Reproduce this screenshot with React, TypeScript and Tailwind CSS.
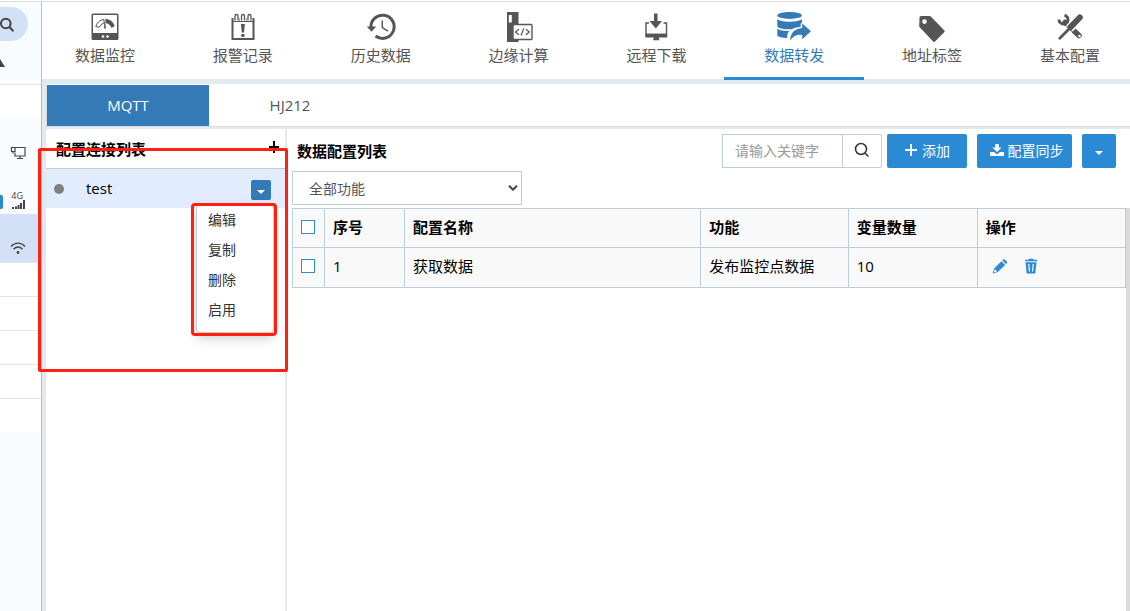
import { useState, type ReactNode } from "react";
import clsx from "clsx";

// --- NAV ICONS ---
const MonitorIcon = () => (
  <svg viewBox="0 0 36 32" className="h-8 w-9" fill="currentColor">
    <path fillRule="evenodd" d="M6 2.5h24a1.5 1.5 0 0 1 1.5 1.5v23.500a1.500 1.500 0 0 1-1.500 1.500H6a1.500 1.500 0 0 1-1.500-1.500V4A1.500 1.500 0 0 1 6 2.500zM6 4v18h24V4z" />
    <path d="M8.800 15.500a10.500 10.500 0 0 1 8-7.200l.4 3.500a8 8 0 0 0-5 4.500z" fill="none" stroke="currentColor" strokeWidth="1" />
    <path d="M18.300 7.800a11 11 0 0 1 9.400 7.200l-3.200 1.900a8 8 0 0 0-6-5z" />
    <path d="M17.200 11.500h1.200l.6 6h-1.800z" />
    <circle cx="16" cy="25.500" r="1.300" fill="white" />
    <circle cx="20.500" cy="25.500" r="1.300" fill="white" />
  </svg>
);

const AlarmIcon = () => (
  <svg viewBox="0 0 36 32" className="h-8 w-9" fill="currentColor">
    <path fillRule="evenodd" d="M6.500 7h23v22h-23zM8.500 11v16h19V11z" />
    <path d="M10 10V5a1.500 1.500 0 0 1 3 0v5M16.500 10V5a1.500 1.500 0 0 1 3 0v5M23 10V5a1.500 1.500 0 0 1 3 0v5" fill="none" stroke="white" strokeWidth="3" />
    <path d="M10 9.500V5a1.500 1.500 0 0 1 3 0v4.500M16.500 9.500V5a1.500 1.500 0 0 1 3 0v4.500M23 9.500V5a1.500 1.500 0 0 1 3 0v4.500" fill="none" stroke="currentColor" strokeWidth="1.300" />
    <path d="M15.900 13h4l-.9 8.500h-2.200z" />
    <rect x="16.300" y="23" width="3.200" height="2.800" />
  </svg>
);

const HistoryIcon = () => (
  <svg viewBox="0 0 36 32" className="h-8 w-9" fill="none" stroke="currentColor">
    <path d="M8 17a11.600 11.600 0 1 1 4.500 8" strokeWidth="3" />
    <path d="M3.800 15.500h9.400l-4.700 5.300z" fill="currentColor" stroke="none" />
    <path d="M19.300 9.500v7l5.700 3.700" strokeWidth="1.400" />
  </svg>
);

const EdgeIcon = () => (
  <svg viewBox="0 0 36 32" className="h-8 w-9" fill="currentColor">
    <path fillRule="evenodd" d="M6 1h11.500v30H6zM7.800 4v7.500h3V4z" />
    <rect x="12" y="13.500" width="19" height="15" rx="1" fill="white" stroke="currentColor" strokeWidth="1.400" />
    <path d="M17.800 18.200l-3.300 2.800 3.300 2.800M25 18.200l3.300 2.800-3.300 2.800M22.800 17.500l-2.800 7" fill="none" stroke="currentColor" strokeWidth="1.200" />
  </svg>
);

const DownloadIcon = () => (
  <svg viewBox="0 0 36 32" className="h-8 w-9" fill="currentColor">
    <path d="M16 2.500h3.500v7.500h4.500l-6.200 7.500-6.300-7.500H16z" />
    <path d="M11 12H8v11.500h20.500V12h-3" fill="none" stroke="currentColor" strokeWidth="1.400" />
    <path d="M7.300 22.700h21.900v3.800h-8.500l.8 2.700h-6.500l.8-2.700H7.300z" />
  </svg>
);

const ForwardIcon = () => (
  <svg viewBox="0 0 36 32" className="h-8 w-9" fill="currentColor">
    <ellipse cx="13.600" cy="4.400" rx="12.300" ry="3.500" />
    <path d="M1.300 8c3.500 3.700 21 3.700 24.600 0v4l-1.200.5v3.200c-4.700.3-7 1.600-9 2.600C9 18.500 3 17.500 1.300 15.500z" />
    <path d="M1.300 17.700c2.200 1.700 7 2.400 12 2.200-2 2.200-2.300 4.400-2 7-5-.1-9-1.200-10-2.500z" />
    <path d="M26.200 12.500 35 20.300l-8.800 8V24c-5-.6-9 .8-12.200 5.700.3-7.300 4.500-12.200 12.200-12.700z" />
  </svg>
);

const TagIcon = () => (
  <svg viewBox="0 0 36 32" className="h-8 w-9" fill="currentColor">
    <path fillRule="evenodd" d="M5.500 6.500A1.500 1.500 0 0 1 7 5h8.500a2 2 0 0 1 1.300.6l13.600 13.900a1 1 0 0 1 0 1.400l-9.600 9.800a1 1 0 0 1-1.400 0L5.700 16.300a2 2 0 0 1-.5-1.300zM10.500 8.300a2.300 2.300 0 1 0 0 4.600 2.300 2.300 0 0 0 0-4.600z" />
  </svg>
);

const ToolsIcon = () => (
  <svg viewBox="0 0 36 32" className="h-8 w-9" fill="none" stroke="currentColor" strokeLinecap="round">
    <path d="M13 11.500l14 13" strokeWidth="5.500" />
    <path d="M7 8.500a4.500 4.500 0 1 0 5.500-4.300" strokeWidth="3" strokeLinecap="butt" />
    <circle cx="27.500" cy="25" r="1.300" fill="white" stroke="none" />
    <path d="M7.800 27.200L17 18M17.500 17.500L27.500 6.500" stroke="white" strokeWidth="9" strokeLinecap="butt" />
    <path d="M7.800 27.200L18 17" strokeWidth="2.800" />
    <path d="M18.500 16.200l9.300-9.700" strokeWidth="6" />
  </svg>
);

const navItems: { label: string; icon: ReactNode }[] = [
  { label: "数据监控", icon: <MonitorIcon /> },
  { label: "报警记录", icon: <AlarmIcon /> },
  { label: "历史数据", icon: <HistoryIcon /> },
  { label: "边缘计算", icon: <EdgeIcon /> },
  { label: "远程下载", icon: <DownloadIcon /> },
  { label: "数据转发", icon: <ForwardIcon /> },
  { label: "地址标签", icon: <TagIcon /> },
  { label: "基本配置", icon: <ToolsIcon /> },
];

const menuItems = ["编辑", "复制", "删除", "启用"];

const configs = [{ id: 1, name: "获取数据", func: "发布监控点数据", count: 10 }];

const Caret = () => (
  <svg viewBox="0 0 8 4" className="h-1 w-2" fill="currentColor">
    <path d="M0 0h8L4 4z" />
  </svg>
);

const Checkbox = ({ label }: { label: string }) => (
  <input
    type="checkbox"
    aria-label={label}
    className="block size-3.5 appearance-none border border-[#2a8ad4] bg-white checked:bg-[#2a8ad4]"
  />
);

// --- DEVICE LIST (LEFT EDGE) ---
function Sidebar() {
  return (
    <aside className="w-[42px] shrink-0 border-r border-[#b8bec3] bg-[#f8fcff] text-[#444]">
      <div className="h-[83px] border-b border-[#e6e6e6] pt-[5px]">
        <button aria-label="搜索" className="flex h-[34px] w-7 items-center rounded-r-full bg-[#d3e1f8]">
          <svg viewBox="0 0 15 16" className="mt-0.5 h-4 w-[15px]" fill="none" stroke="currentColor" strokeWidth="2">
            <circle cx="5.800" cy="6.500" r="4.800" />
            <path d="M9.300 10l4.200 4.200" />
          </svg>
        </button>
        <svg viewBox="0 0 5 8" className="mt-[18px] h-2 w-[5px]" fill="currentColor">
          <path d="M0 0l5 8H0z" />
        </svg>
      </div>
      <div className="h-[33px] bg-white" />
      <div className="flex h-12 justify-end pt-7 pr-[15px]">
        <svg viewBox="0 0 16 14" className="h-3.5 w-4" fill="none" stroke="currentColor" strokeWidth="1.200">
          <path d="M5 1.500h10v8.500H5V6.500M7 12.500h6M10 10v2.500" />
          <path d="M1.500 1.500H5v4H1.500zM3 5.500v2" />
        </svg>
      </div>
      <div className="flex h-12 items-end justify-between pr-4 pb-[5px]">
        <span className="h-3.5 w-[3px] rounded-r-xs bg-[#2a8ad4]" />
        <span className="flex w-3.5 flex-col items-end">
          <span className="mr-0.5 text-[9px] leading-[9px]">4G</span>
          <svg viewBox="0 0 13 9" className="h-[9px] w-[13px]" fill="currentColor">
            <path d="M0 7h2v2H0zM3 6.500h2V9H3zM5.500 5h2v4h-2zM8 3h2v6H8zM11 0h2v9h-2z" />
          </svg>
        </span>
      </div>
      <div className="flex h-12 justify-end bg-[#d3e1f8] pt-[27px] pr-[15px]">
        <svg viewBox="0 0 16 14" className="h-3.5 w-4" fill="none" stroke="currentColor" strokeWidth="1.400">
          <path d="M1 5.500c4-4.500 10-4.500 14 0M3.500 8.300c3-3 6-3 9 0" />
          <circle cx="8" cy="11.500" r="1.400" fill="currentColor" stroke="none" />
        </svg>
      </div>
      {[1, 2, 3, 4, 5].map((row) => (
        <div key={row} className="h-[34px] border-t border-[#e6e6e6] bg-white" />
      ))}
    </aside>
  );
}

// --- CONNECTION LIST ---
function ConnectionPanel() {
  const [menuOpen, setMenuOpen] = useState(true);

  return (
    <section className="relative w-[241px] shrink-0 border-r-2 border-[#e2e9ef] bg-white">
      <header className="flex h-10 items-center justify-between border-b border-[#c9c9c4] pr-[5px] pl-2.5">
        <h2 className="text-[15px] leading-5 font-bold">配置连接列表</h2>
        <button aria-label="新增连接" className="mb-1">
          <svg viewBox="0 0 12 12" className="size-3" stroke="currentColor" strokeWidth="2">
            <path d="M6 0v12M1 6h10" />
          </svg>
        </button>
      </header>
      <div className="relative flex h-[39px] items-center bg-[#e2ecff] pr-3.5 pl-2">
        <span className="size-2.5 rounded-full bg-[#808080]" />
        <span className="mb-0.5 ml-[22px] text-[15px] leading-5">test</span>
        <button
          aria-label="操作菜单"
          onClick={() => setMenuOpen(!menuOpen)}
          className="mt-0.5 ml-auto flex size-5 items-center justify-center rounded-xs bg-[#337ab7] pt-1 text-white"
        >
          <Caret />
        </button>
        {menuOpen && (
          <ul className="absolute top-8.5 right-[11px] z-10 w-[78px] rounded-sm border border-[#ccc] bg-white pt-px pb-[7px] text-sm leading-[30px] text-[#333] shadow-[0_6px_12px_rgba(0,0,0,0.18)]">
            {menuItems.map((item) => (
              <li key={item}>
                <button className="block w-full pl-[11px] text-left">{item}</button>
              </li>
            ))}
            <li aria-hidden="true" className="pointer-events-none absolute -top-px -right-1 -bottom-1 -left-1.5 rounded-sm border-3 border-[#ff2112]" />
          </ul>
        )}
      </div>
      <div aria-hidden="true" className="pointer-events-none absolute top-[19px] -right-[3px] -left-2 h-[224px] rounded-xs border-3 border-[#ff2112]" />
    </section>
  );
}

// --- DATA CONFIG LIST ---
function ConfigPanel() {
  return (
    <section className="flex min-w-0 flex-1 flex-col bg-white pt-[5px]">
      <div className="flex items-center pr-3.5 pl-2.5">
        <h2 className="text-[15px] leading-5 font-bold">数据配置列表</h2>
        <form className="ml-auto flex h-[34px]" onSubmit={(e) => e.preventDefault()}>
          <input
            type="text"
            aria-label="关键字"
            placeholder="请输入关键字"
            className="w-[121px] border border-[#bccede] px-3 text-sm outline-none placeholder:text-[#999]"
          />
          <button aria-label="查询" className="-ml-px flex w-10 items-center justify-center rounded-r-xs border border-[#ccc] text-[#333]">
            <svg viewBox="0 0 16 16" className="mb-0.5 size-4" fill="none" stroke="currentColor" strokeWidth="1.500">
              <circle cx="7" cy="7" r="5.500" />
              <path d="M11 11l3.500 3.500" />
            </svg>
          </button>
        </form>
        <button className="ml-[5px] flex h-[34px] w-20 items-center justify-center gap-1 rounded-xs bg-[#2a8ad4] text-sm text-white">
          <svg viewBox="0 0 14 14" className="mb-0.5 size-3.5" stroke="currentColor" strokeWidth="1.800">
            <path d="M7 1v12M1 7h12" />
          </svg>
          添加
        </button>
        <button className="ml-2.5 flex h-[34px] w-[95px] items-center justify-center gap-1 rounded-xs bg-[#2a8ad4] pl-1 text-sm text-white">
          <svg viewBox="0 0 14 14" className="mb-0.5 size-3.5" fill="currentColor">
            <path d="M5.300 1h3.400v3.500h2.800L7 9 2.500 4.500h2.800z" />
            <path d="M0 9h4l3 2.500L10 9h4v4H0z" />
          </svg>
          配置同步
        </button>
        <button aria-label="更多" className="ml-2.5 flex h-[34px] w-[34px] items-center justify-center rounded-xs bg-[#2a8ad4] pt-1 text-white">
          <Caret />
        </button>
      </div>

      <div className="relative mt-[3px] ml-[5px] h-[34px] w-[230px]">
        <select aria-label="功能筛选" className="size-full appearance-none border border-[#bccede] bg-white pt-px pl-4 text-sm text-[#555]">
          <option>全部功能</option>
        </select>
        <svg viewBox="0 0 10 6" className="pointer-events-none absolute top-3.5 right-1 h-1.5 w-2.5" fill="none" stroke="#444" strokeWidth="2">
          <path d="M1 .7l4 4 4-4" />
        </svg>
      </div>

      <div className="mt-[3px] ml-[5px] flex-1 border-r-4 border-[#dadada]">
        <table className="w-full table-fixed border-collapse bg-[#f9f9f9] text-left text-[15px] leading-5 [&_td]:border [&_td]:border-[#bccede] [&_td]:px-2 [&_td]:pb-[3px] [&_th]:border [&_th]:border-[#bccede] [&_th]:px-2 [&_th]:pb-0.5">
          <thead>
            <tr className="h-[39px]">
              <th className="w-8"><Checkbox label="全选" /></th>
              <th className="w-20">序号</th>
              <th>配置名称</th>
              <th className="w-[17.7%]">功能</th>
              <th className="w-[15.5%]">变量数量</th>
              <th className="w-[17.8%]">操作</th>
            </tr>
          </thead>
          <tbody>
            {configs.map((row) => (
              <tr key={row.id} className="h-10">
                <td><Checkbox label={row.name} /></td>
                <td>{row.id}</td>
                <td>{row.name}</td>
                <td>{row.func}</td>
                <td>{row.count}</td>
                <td>
                  <div className="flex gap-[15px] pl-1.5 text-[#2a8ad4]">
                    <button aria-label="编辑">
                      <svg viewBox="0 0 16 16" className="size-4" fill="currentColor">
                        <path d="M11.300 1.500a1 1 0 0 1 1.400 0l2.300 2.200a1 1 0 0 1 0 1.400l-1 1-3.700-3.600zM9.500 3.300l3.700 3.600-7.400 7.200L.6 15.500l1.500-5z" />
                        <path d="M2.800 11.200l2.400 2.400-2.700.7-.6-.6z" fill="white" />
                      </svg>
                    </button>
                    <button aria-label="删除">
                      <svg viewBox="0 0 16 16" className="size-4" fill="currentColor">
                        <path d="M5.800.8h4.400v1h3.800v1.500H2V1.800h3.800z" />
                        <path d="M2.500 4.300h11L12.300 15.500H3.700z" />
                        <path d="M5.700 6l.8 7.500M10.300 6l-.8 7.500" stroke="white" strokeWidth="1.200" />
                      </svg>
                    </button>
                  </div>
                </td>
              </tr>
            ))}
          </tbody>
        </table>
      </div>
    </section>
  );
}

export default function App() {
  const [active, setActive] = useState("数据转发");
  const [tab, setTab] = useState("MQTT");

  return (
    <div className="min-h-screen bg-white pt-px font-['Open_Sans','Noto_Sans_CJK_SC',sans-serif] text-black">
      <div className="flex min-h-[calc(100vh-1px)] border-t border-[#dcdcdc]">
        <Sidebar />
        <main className="flex min-w-0 flex-1 flex-col bg-[#e2e9ef]">
          <nav className="flex h-[77px] justify-between bg-white pr-[30px] pl-[33px]">
            {navItems.map(({ label, icon }) => (
              <button
                key={label}
                onClick={() => setActive(label)}
                className={clsx(
                  "relative flex w-[60px] flex-col items-center pt-[9px] text-[15px] leading-5 whitespace-nowrap",
                  active === label ? "text-[#337ab7]" : "text-[#555]"
                )}
              >
                {icon}
                <span className="mt-0.5">{label}</span>
                {active === label && <span className="absolute -right-10 -bottom-px -left-10 h-[3px] bg-[#2a8ad4]" />}
              </button>
            ))}
          </nav>

          <div className="mt-[5px] ml-1 flex h-[43px] border-b border-l border-[#d9dde0] bg-white pt-px text-[15px]">
            {["MQTT", "HJ212"].map((name) => (
              <button
                key={name}
                onClick={() => setTab(name)}
                className={clsx("w-[162px]", tab === name ? "bg-[#337ab7] text-white" : "text-[#555]")}
              >
                {name}
              </button>
            ))}
          </div>

          <div className="mt-0.5 ml-1 flex flex-1">
            <ConnectionPanel />
            <ConfigPanel />
          </div>
        </main>
      </div>
    </div>
  );
}
